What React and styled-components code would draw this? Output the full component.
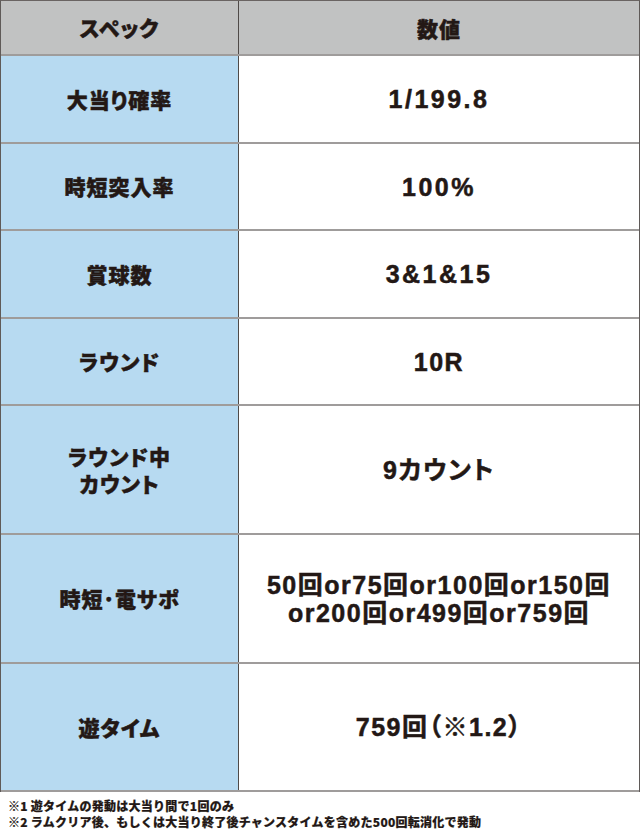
import React from "react";
import styled, { createGlobalStyle } from "styled-components";

const Global = createGlobalStyle`
  html, body { margin: 0; padding: 0; background: #ffffff; }
  body { font-family: "Noto Sans CJK JP", sans-serif; color: #231815; }
`;

const Page = styled.div`
  width: 640px;
`;

const Table = styled.div`
  border-top: 1px solid #6a6462;
  border-left: 1px solid #5f5a58;
  border-right: 1px solid #5f5a58;
`;

const Row = styled.div`
  display: grid;
  grid-template-columns: 238px 1fr;
  height: ${(p) => p.$h}px;
  border-bottom: 2px solid rgba(80, 74, 72, 0.55);
  box-sizing: border-box;
`;

const LabelCell = styled.div`
  display: flex;
  align-items: center;
  justify-content: center;
  text-align: center;
  background: ${(p) => (p.$head ? "#c1c2c2" : "#b7daf1")};
  border-right: 1px solid #4f4a48;
  font-family: "Noto Sans CJK JP", sans-serif;
  font-weight: 900;
  font-size: 21px;
  letter-spacing: 1px;
  line-height: 27px;
  font-feature-settings: "palt";
  -webkit-text-stroke: 0.5px #231815;
`;

const ValueCell = styled.div`
  display: flex;
  align-items: center;
  justify-content: center;
  text-align: center;
  background: ${(p) => (p.$head ? "#c1c2c2" : "#ffffff")};
  font-family: ${(p) =>
    p.$head
      ? '"Noto Sans CJK JP", sans-serif'
      : '"Liberation Sans", "Noto Sans CJK JP", sans-serif'};
  font-weight: ${(p) => (p.$head ? 900 : 700)};
  font-size: ${(p) => (p.$head ? 21 : 25)}px;
  letter-spacing: ${(p) => (p.$head ? 1 : p.$wide ? 2.5 : 1.5)}px;
  line-height: 28px;
  font-feature-settings: "palt";
  -webkit-text-stroke: 0.5px #231815;
`;

const Notes = styled.div`
  padding: 6px 0 0 8px;
  font-family: "Noto Sans CJK JP", sans-serif;
  font-weight: 900;
  font-size: 12px;
  letter-spacing: 0.25px;
  line-height: 16px;
  -webkit-text-stroke: 0.2px #231815;
`;

const Note = styled.div`
  white-space: nowrap;
`;

const rows = [
  { h: 88, label: ["大当り確率"], value: ["1/199.8"], wide: true },
  { h: 87, label: ["時短突入率"], value: ["100%"], wide: true },
  { h: 88, label: ["賞球数"], value: ["3&1&15"], wide: true },
  { h: 87, label: ["ラウンド"], value: ["10R"] },
  { h: 129, label: ["ラウンド中", "カウント"], value: ["9カウント"] },
  {
    h: 129,
    label: ["時短･電サポ"],
    value: ["50回or75回or100回or150回", "or200回or499回or759回"],
  },
  { h: 128, label: ["遊タイム"], value: ["759回（※1.2）"] },
];

const Lines = ({ lines }) => (
  <div>
    {lines.map((l, i) => (
      <div key={i}>{l}</div>
    ))}
  </div>
);

export default function App() {
  return (
    <Page>
      <Global />
      <Table>
        <Row $h={55}>
          <LabelCell $head>スペック</LabelCell>
          <ValueCell $head>数値</ValueCell>
        </Row>
        {rows.map((r, i) => (
          <Row key={i} $h={r.h}>
            <LabelCell>
              <Lines lines={r.label} />
            </LabelCell>
            <ValueCell $wide={r.wide}>
              <Lines lines={r.value} />
            </ValueCell>
          </Row>
        ))}
      </Table>
      <Notes>
        <Note>※1 遊タイムの発動は大当り間で1回のみ</Note>
        <Note>※2 ラムクリア後、もしくは大当り終了後チャンスタイムを含めた500回転消化で発動</Note>
      </Notes>
    </Page>
  );
}
